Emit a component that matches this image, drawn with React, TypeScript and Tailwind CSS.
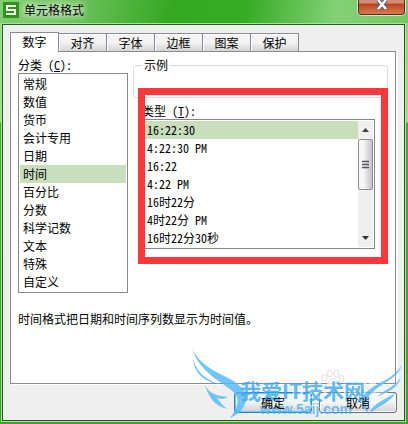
import type { ReactNode } from "react";

const categories = ["常规", "数值", "货币", "会计专用", "日期", "时间", "百分比", "分数", "科学记数", "文本", "特殊", "自定义"];
const types = ["16:22:30", "4:22:30 PM", "16:22", "4:22 PM", "16时22分", "4时22分 PM", "16时22分30秒"];
const tabs = ["数字", "对齐", "字体", "边框", "图案", "保护"];

const optionClass =
  "h-[18px] min-h-0 pl-[3px] py-0 text-[12px] leading-[18px] text-black checked:bg-[linear-gradient(#c9dfbb,#c9dfbb)]";
const selectClass =
  "block w-full appearance-none overflow-hidden bg-white p-0 text-[12px] outline-none [scrollbar-width:none]";

function DialogButton({ children, primary = false }: { children: ReactNode; primary?: boolean }) {
  return (
    <button
      type="button"
      className={`h-[21px] w-[78px] rounded-[3px] border bg-linear-to-b from-[#f4f4f4] from-45% to-[#d2d2d2] text-[12px] leading-[18px] ${
        primary ? "border-[#3c7fb1] shadow-[inset_0_0_0_1px_#63cdf5]" : "border-[#707070] shadow-[inset_0_0_0_1px_#fafafa]"
      }`}
    >
      <span className="relative z-20">{children}</span>
    </button>
  );
}

function ScrollBar() {
  return (
    <div className="flex w-4 flex-col bg-[#efefef]">
      <button type="button" aria-label="向上" className="flex h-[18px] items-center justify-center">
        <svg width="7" height="4" aria-hidden="true"><path d="M0 4L3.500 0L7 4Z" fill="#404040" /></svg>
      </button>
      <div className="flex h-[51px] flex-col items-center justify-center rounded-[2px] border border-[#8e8f92] bg-linear-to-r from-[#f6f6f6] from-35% to-[#c3c3c8]">
        <svg width="7" height="9" aria-hidden="true">
          <path d="M0 1.500H7M0 4.500H7M0 7.500H7" stroke="#55565c" strokeWidth="1.500" />
        </svg>
      </div>
      <div className="grow" />
      <button type="button" aria-label="向下" className="flex h-[18px] items-center justify-center">
        <svg width="7" height="4" aria-hidden="true"><path d="M0 0H7L3.500 4Z" fill="#303030" /></svg>
      </button>
    </div>
  );
}

function Watermark() {
  return (
    <div aria-hidden="true" className="pointer-events-none absolute right-0 bottom-0 z-10 h-[84px] w-[222px] [font-feature-settings:normal]">
      <svg viewBox="0 0 24 22" width="26" height="22" className="absolute top-[29px] left-[134px]" fill="#ffffff" fillOpacity="0.7" stroke="#c8c8c8" strokeOpacity="0.6">
        <ellipse cx="3.500" cy="9" rx="2.500" ry="3.500" />
        <ellipse cx="9" cy="4.500" rx="2.500" ry="3.500" />
        <ellipse cx="15.500" cy="4.500" rx="2.500" ry="3.500" />
        <ellipse cx="20.500" cy="10" rx="2.500" ry="3.500" />
        <path d="M12 10C9 10 4 16 5 19C7 23 10 20 12 20C15 20 18 23 20 19C20 15 15 10 12 10Z" />
      </svg>
      <div className="absolute top-[40px] left-[105px] text-[20px] leading-[22px] font-bold whitespace-nowrap text-white/60">Baidu经验</div>
      <div className="absolute top-[58px] left-[105px] font-['Liberation_Sans',sans-serif] text-[11px] leading-[13px] whitespace-nowrap text-white/70">jingyan.baidu.com</div>
      <svg viewBox="0 0 222 84" width="222" height="84" className="absolute inset-0" fill="#4db8fb" fillOpacity="0.8">
        <path d="M6 8C10 19 22 28 34 34C50 41 62 50 60 60C59 68 52 75 44 78C50 70 54 62 50 55C44 45 14 36 6 8Z" />
        <path d="M7 19C11 33 20 39 32 44C20 42 8 34 7 19Z" />
        <path d="M19 45C23 54 32 56 42 57C37 60 32 59 30 57C34 61 36 66 42 69C29 67 22 56 19 45Z" />
        <path d="M216 25C211 41 190 44 182 58C179 64 181 68 183 74C173 65 174 56 184 49C195 41 207 39 216 25Z" />
        <path d="M215 37C211 50 200 52 191 57C199 49 208 48 215 37Z" />
        <path d="M209 53C204 63 192 66 183 74C188 62 199 60 209 53Z" />
      </svg>
      <div className="absolute top-[38px] left-[54px] text-[21px] leading-[24px] font-bold whitespace-nowrap text-[#35a8f5]/80">我爱IT技术网</div>
      <div className="absolute top-[61px] left-[74px] font-['Liberation_Sans',sans-serif] text-[14px] leading-[16px] font-bold whitespace-nowrap text-[#45b0f6]/75">www.5aij.com</div>
    </div>
  );
}

export default function App() {
  return (
    <main className="relative flex min-h-screen w-full flex-col overflow-hidden bg-[linear-gradient(#8bd67b_0,#a1dc94_122px,#3eae2d_123px,#39a52a)] pr-[2px] pb-[2px] pl-px font-['Noto_Sans_CJK_SC',sans-serif] text-[12px] text-black [font-feature-settings:'hwid']">
      <div className="-mr-[2px] -ml-px flex h-[23px] items-start justify-between bg-[linear-gradient(100deg,#83cc72_0,#76c665_15%,#35a822_42%,#36ab24_60%,#83d176_82%,#72c963_100%)] px-[3px]">
        <div className="flex items-center gap-[5px] pt-[2px]">
          <svg width="16" height="16" aria-hidden="true">
            <path d="M0 0H16V16H0Z" fill="#2e9415" />
            <path d="M13 4H4V8H12V12H3" fill="none" stroke="#fff" strokeWidth="2" />
          </svg>
          <h1 className="text-[12px] leading-[16px] font-normal [text-shadow:0_0_6px_#fff,0_0_8px_#fff]">单元格格式</h1>
        </div>
        <button type="button" aria-label="关闭" className="flex h-[15px] w-[47px] items-start justify-center rounded-b-[4px] border border-t-0 border-[#5b2a20] bg-linear-to-b from-[#d68c72] from-20% via-[#bb4420] via-30% to-[#d87950] shadow-[0_0_0_1px_#c9e9c2]">
          <svg width="12" height="11" aria-hidden="true">
            <path d="M2 0L10 9M10 0L2 9" stroke="#59597a" strokeWidth="4.500" />
            <path d="M2 0L10 9M10 0L2 9" stroke="#fff" strokeWidth="2.500" />
          </svg>
        </button>
      </div>

      <div className="flex grow flex-col border border-[#a9e09c] bg-[#235f1b] p-px">
        <div className="flex grow flex-col bg-[#efefef] pt-[7px] pr-[8px] pb-[7px] pl-[7px]">
          <div role="tablist" className="relative z-10 -mb-px flex items-end">
            {tabs.map((tab, i) => (
              <button
                key={tab}
                type="button"
                role="tab"
                aria-selected={i === 0}
                className={
                  i === 0
                    ? "h-[20px] w-[49px] border border-b-0 border-[#898c95] bg-white pb-px text-[12px] leading-[18px]"
                    : "h-[19px] w-[48px] border border-l-0 border-[#898c95] bg-linear-to-b from-[#f3f3f3] from-50% to-[#d4d4d4] text-[12px] leading-[18px] shadow-[inset_1px_1px_0_#fff]"
                }
              >
                {tab}
              </button>
            ))}
          </div>

          <section role="tabpanel" className="flex grow flex-col border border-[#898c95] bg-white px-[7px] pt-[5px] shadow-[2px_1px_0_#fff]">
            <div className="flex gap-[5px]">
              <div className="w-[110px] shrink-0">
                <label htmlFor="category" className="block h-[16px] leading-[16px]">分类 (<u>C</u>):</label>
                <div className="border border-[#828790] bg-white p-px">
                  <select id="category" size={12} defaultValue="时间" className={`${selectClass} h-[216px]`}>
                    {categories.map((c) => <option key={c} className={optionClass}>{c}</option>)}
                  </select>
                </div>
              </div>
              <div className="min-w-0 grow">
                <fieldset className="h-[41px] rounded-[3px] border border-[#d5dfe5] pl-[8px]">
                  <legend className="px-[2px] leading-[16px]">示例</legend>
                </fieldset>
                <div className="relative pt-[5px] pr-[13px] pl-[9px]">
                  <label htmlFor="type" className="block h-[16px] leading-[16px]">类型 (<u>T</u>):</label>
                  <div className="flex border border-[#828790] bg-white p-px">
                    <select id="type" size={7} defaultValue="16:22:30" className={`${selectClass} h-[126px]`}>
                      {types.map((t) => <option key={t} className={optionClass}>{t}</option>)}
                    </select>
                    <ScrollBar />
                  </div>
                  <div aria-hidden="true" className="pointer-events-none absolute -top-[10px] right-0 left-[5px] h-[176px] border-7 border-[#fd3838]" />
                </div>
              </div>
            </div>
            <p className="mt-[17px] leading-[18px]">时间格式把日期和时间序列数显示为时间值。</p>
          </section>

          <div className="mt-[8px] -mr-px flex justify-end gap-[7px]">
            <DialogButton primary>确定</DialogButton>
            <DialogButton>取消</DialogButton>
          </div>
        </div>
      </div>
      <Watermark />
    </main>
  );
}
